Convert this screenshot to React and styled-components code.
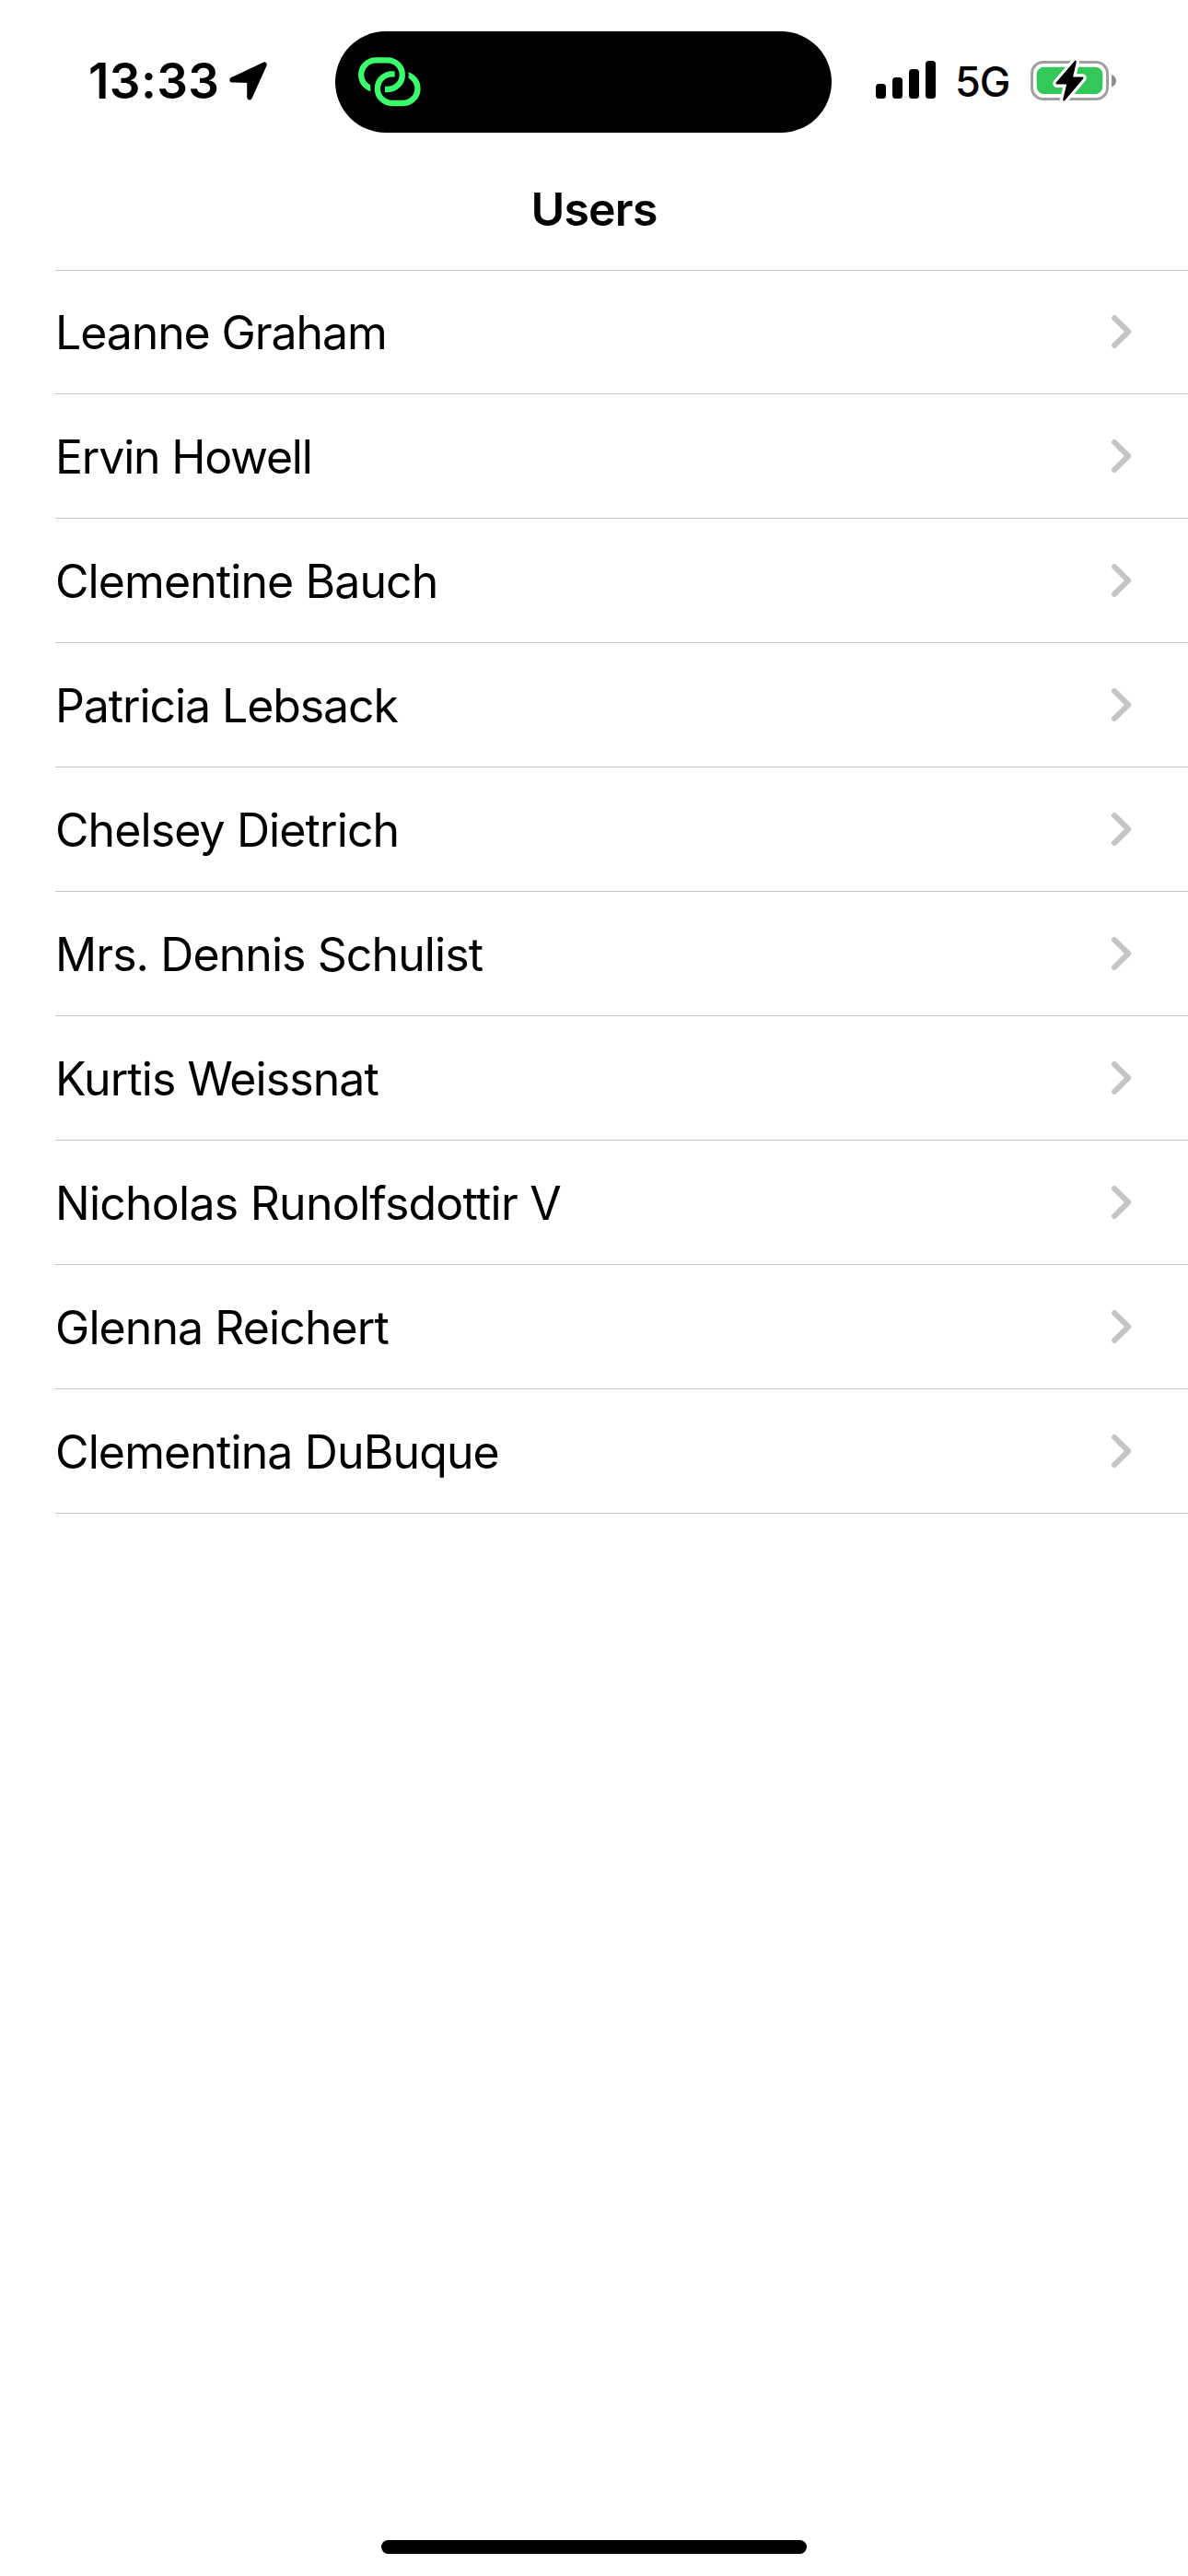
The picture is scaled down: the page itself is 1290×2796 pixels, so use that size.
import React from 'react';
import styled, { createGlobalStyle } from 'styled-components';

const GlobalStyle = createGlobalStyle`
  *, *::before, *::after { box-sizing: border-box; }
  body { margin: 0; background: #fff; }
`;

const Screen = styled.div`
  width: 1290px;
  height: 2796px;
  display: flex;
  flex-direction: column;
  background: #fff;
  color: #000;
  font-family: Inter, "Liberation Sans", sans-serif;
  overflow: hidden;
`;

const StatusBar = styled.header`
  height: 177px;
  flex: none;
  display: grid;
  grid-template-columns: 364px 539px 1fr;
  align-items: start;
`;

const StatusLeft = styled.div`
  display: flex;
  align-items: center;
  height: 110px;
  margin-top: 33px;
  padding-left: 96px;
  gap: 12px;
`;

const Time = styled.span`
  width: 141px;
  font-size: 53px;
  font-weight: 600;
  line-height: 64px;
  letter-spacing: 0.4px;
  white-space: nowrap;
`;

const Island = styled.div`
  display: flex;
  align-items: center;
  height: 110px;
  margin-top: 34px;
  padding-left: 25px;
  border-radius: 55px;
  background: #000;
`;

const StatusRight = styled.div`
  display: flex;
  align-items: flex-start;
  padding: 65px 0 0 48px;
`;

const Signal = styled.div`
  display: flex;
  align-items: flex-end;
  gap: 7px;
  height: 42px;
`;

const Bar = styled.i`
  width: 11px;
  height: ${(p) => p.$height}px;
  border-radius: 3.5px;
  background: #000;
`;

const Network = styled.span`
  width: 60px;
  margin: -3px 22px 0 21px;
  font-size: 45px;
  font-weight: 450;
  line-height: 54px;
  letter-spacing: -1px;
  white-space: nowrap;
`;

const Icon = styled.svg`
  display: block;
  flex: none;
`;

const ChevronIcon = styled(Icon)`
  margin-bottom: 1px;
`;

const TitleBar = styled.div`
  height: 116px;
  flex: none;
  display: flex;
  justify-content: center;
  padding-top: 19px;
`;

const Title = styled.h1`
  margin: 0;
  font-size: 50px;
  font-weight: 600;
  line-height: 62px;
  letter-spacing: -0.8px;
`;

const List = styled.ul`
  list-style: none;
  margin: 0 0 0 60px;
  padding: 0;
  border-top: 1px solid #c6c6c8;
`;

const Row = styled.li`
  display: flex;
  align-items: center;
  justify-content: space-between;
  height: 135px;
  padding: 1px 61px 0 0;
  border-bottom: 1px solid #c6c6c8;

  &:first-child {
    height: 134px;
    padding-top: 0;
  }
`;

const Name = styled.span`
  padding-top: 1px;
  font-size: 50px;
  line-height: 62px;
  letter-spacing: ${(p) => p.$tracking}px;
  white-space: nowrap;
`;

const HomeIndicator = styled.div`
  width: 462px;
  height: 15px;
  margin: auto auto 24px;
  border-radius: 8px;
  background: #000;
`;

const users = [
  { name: 'Leanne Graham', tracking: -1.1 },
  { name: 'Ervin Howell', tracking: -1.2 },
  { name: 'Clementine Bauch', tracking: -0.91 },
  { name: 'Patricia Lebsack', tracking: -1.1 },
  { name: 'Chelsey Dietrich', tracking: -0.9 },
  { name: 'Mrs. Dennis Schulist', tracking: -0.92 },
  { name: 'Kurtis Weissnat', tracking: -0.92 },
  { name: 'Nicholas Runolfsdottir V', tracking: -0.76 },
  { name: 'Glenna Reichert', tracking: -0.92 },
  { name: 'Clementina DuBuque', tracking: -0.88 },
];

const LocationArrow = () => (
  <Icon width="42" height="42" viewBox="0 0 42 42">
    <path
      d="M3.2 19.6 L38 3.2 L22 38.6 L22 20.2 Z"
      fill="#000"
      stroke="#000"
      strokeWidth="5.6"
      strokeLinejoin="round"
    />
  </Icon>
);

const LinkLoops = () => (
  <Icon width="68" height="53.3" viewBox="117 126 204 160">
    <clipPath id="loopA">
      <path d="M110 120H280V250H204V206H157V250H110Z" />
    </clipPath>
    <clipPath id="loopB">
      <path d="M327 292H157V162H236V206H281V162H327Z" />
    </clipPath>
    <g fill="none" stroke="#3cff6e" strokeWidth="19">
      <path clipPath="url(#loopA)" d="M174 231A47.5 47.5 0 0 1 174 136H213A47.5 47.5 0 0 1 213 231H203" />
      <path clipPath="url(#loopB)" d="M263 181A47.5 47.5 0 0 1 263 276H227A47.5 47.5 0 0 1 227 181H237" />
    </g>
  </Icon>
);

const Battery = () => (
  <Icon width="95" height="46" viewBox="837 132 285 138">
    <rect x="841.5" y="139.5" width="246" height="120" rx="37" fill="none" stroke="#a0a0a0" strokeWidth="9" />
    <rect x="857" y="155" width="215" height="88" rx="24" fill="#34c759" />
    <path d="M1101 180Q1116 186 1116 200Q1116 214 1101 220Z" fill="#8e8e8e" />
    <path
      d="M983 138L923 209H959L946 262L1006 191H971Z"
      fill="#000"
      stroke="#fff"
      strokeWidth="26"
      strokeLinejoin="round"
    />
    <path
      d="M983 138L923 208H959L946 262L1006 191H971Z"
      fill="#000"
      stroke="#000"
      strokeWidth="7"
      strokeLinejoin="round"
    />
  </Icon>
);

const Chevron = () => (
  <ChevronIcon width="22" height="36" viewBox="0 0 22 36">
    <path
      d="M3.1 3.1L18.2 18L3.1 32.9"
      fill="none"
      stroke="#c5c5c7"
      strokeWidth="6"
      strokeLinecap="round"
      strokeLinejoin="round"
    />
  </ChevronIcon>
);

export default function App() {
  return (
    <Screen>
      <GlobalStyle />
      <StatusBar>
        <StatusLeft>
          <Time>13:33</Time>
          <LocationArrow />
        </StatusLeft>
        <Island>
          <LinkLoops />
        </Island>
        <StatusRight>
          <Signal>
            {[16, 23, 32, 41].map((height) => (
              <Bar key={height} $height={height} />
            ))}
          </Signal>
          <Network>5G</Network>
          <Battery />
        </StatusRight>
      </StatusBar>
      <TitleBar>
        <Title>Users</Title>
      </TitleBar>
      <List>
        {users.map(({ name, tracking }) => (
          <Row key={name}>
            <Name $tracking={tracking}>{name}</Name>
            <Chevron />
          </Row>
        ))}
      </List>
      <HomeIndicator />
    </Screen>
  );
}
